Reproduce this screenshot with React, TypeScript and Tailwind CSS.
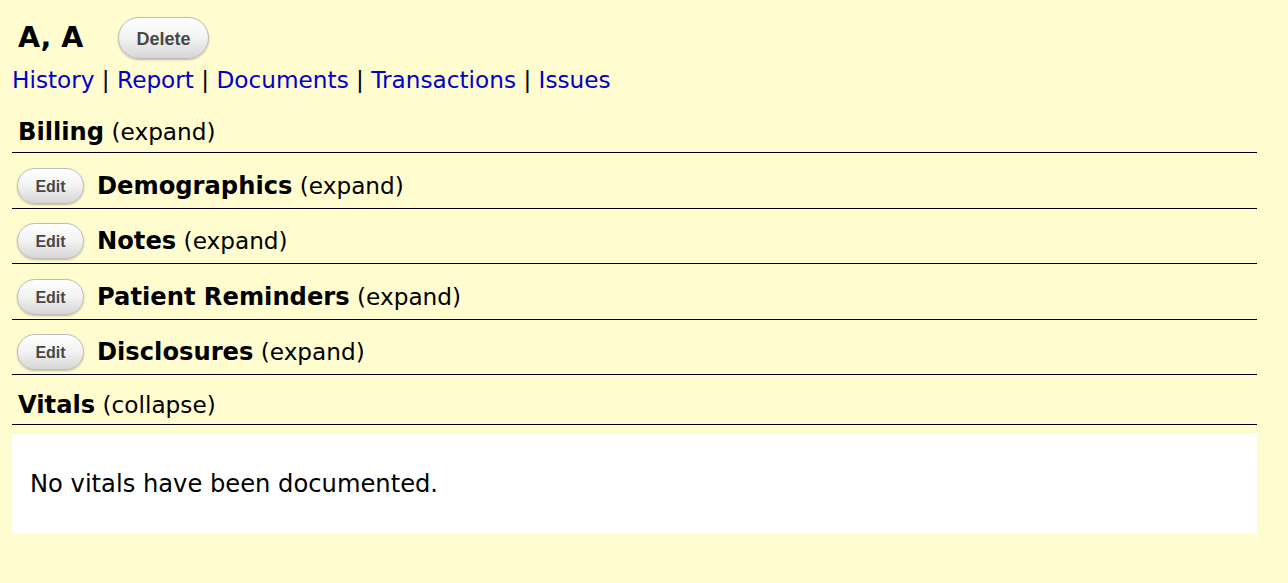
const sections = [
  { title: "Demographics", edit: true },
  { title: "Notes", edit: true },
  { title: "Patient Reminders", edit: true },
  { title: "Disclosures", edit: true },
]

function PillButton({ label, big = false }: { label: string; big?: boolean }) {
  return (
    <button
      className={`rounded-full border border-[#bdbdbd] bg-gradient-to-b from-white via-[#f2f2f2] to-[#d6d6d6] pt-[2px] font-bold text-[#474747] shadow-[0_1px_2px_rgba(0,0,0,0.25)] ${
        big ? "h-[42px] w-[91px] text-[18px]" : "h-[36px] w-[67px] text-[16px]"
      }`}
      style={{ fontFamily: '"Liberation Sans", Arial, sans-serif' }}
    >
      {label}
    </button>
  )
}

function Heading({ title, label }: { title: string; label: string }) {
  return (
    <span>
      <span className="text-[24.2px] font-bold">{title}</span> {label}
    </span>
  )
}

export default function App() {
  const links = ["History", "Report", "Documents", "Transactions", "Issues"]

  return (
    <div
      className="min-h-screen bg-[#fffcd0] px-[12px] text-black"
      style={{ fontFamily: '"DejaVu Sans", sans-serif' }}
    >
      {/* Patient name + delete */}
      <div className="flex items-center pt-[17px]">
        <span className="ml-[6px] w-[100px] text-[28.5px] font-bold leading-none">A, A</span>
        <PillButton label="Delete" big />
      </div>

      {/* Nav links */}
      <div className="mt-[7px] text-[23.2px] leading-[28px]">
        {links.map((l, i) => (
          <span key={l}>
            <a className="text-[#0000cc]">{l}</a>
            {i < links.length - 1 && " | "}
          </span>
        ))}
      </div>

      <div className="w-[1245px]">
        {/* Billing */}
        <div className="mt-[12px] border-b border-black pb-[6px] pl-[6px] pt-[12px] text-[23.2px] leading-[28px]">
          <Heading title="Billing" label="(expand)" />
        </div>

        {sections.map((s) => (
          <div
            key={s.title}
            className="flex items-center border-b border-black pb-[4px] pl-[5px] pt-[14.5px] text-[23.2px] leading-[28px]"
          >
            <PillButton label="Edit" />
            <span className="ml-[13px]">
              <Heading title={s.title} label="(expand)" />
            </span>
          </div>
        ))}

        {/* Vitals */}
        <div className="border-b border-black pb-[5px] pl-[6px] pt-[16px] text-[23.2px] leading-[28px]">
          <Heading title="Vitals" label="(collapse)" />
        </div>

        <div className="mt-[9px] bg-white px-[18px] pb-[35px] pt-[36px] text-[24.2px] leading-[28px]">
          No vitals have been documented.
        </div>
      </div>
    </div>
  )
}
